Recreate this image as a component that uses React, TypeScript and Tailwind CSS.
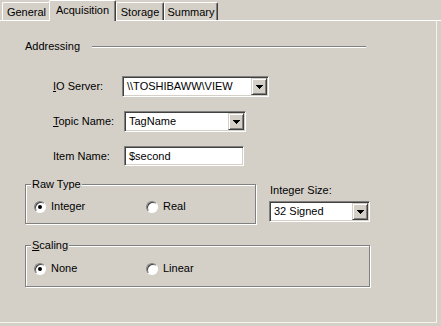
import React from "react";

const sunken =
  "border border-t-[#808080] border-l-[#808080] border-b-white border-r-white shadow-[inset_1px_1px_0_#404040,inset_-1px_-1px_0_#d4d0c8] bg-white";

function DropButton() {
  return (
    <div className="flex h-full w-[16px] items-center justify-center border border-t-[#d4d0c8] border-l-[#d4d0c8] border-b-[#404040] border-r-[#404040] bg-[#d4d0c8] shadow-[inset_1px_1px_0_white,inset_-1px_-1px_0_#808080]">
      <svg width="7" height="4" viewBox="0 0 7 4">
        <path d="M0 0h7v1H0zM1 1h5v1H1zM2 2h3v1H2zM3 3h1v1H3z" fill="black" />
      </svg>
    </div>
  );
}

function Combo({ value, width }: { value: string; width: string }) {
  return (
    <div className={`flex h-[21px] items-stretch p-px ${sunken} ${width}`}>
      <div className="flex flex-1 items-center pl-[3px] leading-none">{value}</div>
      <DropButton />
    </div>
  );
}

function Radio({ label, checked }: { label: React.ReactNode; checked?: boolean }) {
  return (
    <div className="flex items-center gap-[5px]">
      <span className="flex h-3 w-3 items-center justify-center rounded-full border border-t-[#808080] border-l-[#808080] border-b-white border-r-white bg-white shadow-[inset_1px_1px_0_#404040]">
        {checked && <span className="h-1 w-1 rounded-full bg-black" />}
      </span>
      <span>{label}</span>
    </div>
  );
}

function Tab({ label, active, className = "" }: { label: string; active?: boolean; className?: string }) {
  if (active) {
    return (
      <div
        className={`relative z-10 -mb-px flex h-[21px] items-start justify-center border-l border-t border-r border-l-white border-t-white border-r-[#404040] bg-[#d4d0c8] pt-[3px] shadow-[inset_-1px_0_0_#808080] rounded-tl-[2px] rounded-tr-[2px] ${className}`}
      >
        {label}
      </div>
    );
  }
  return (
    <div
      className={`flex h-[18px] items-start justify-center border-l border-t border-r border-l-white border-t-white border-r-[#404040] pt-[3px] shadow-[inset_-1px_0_0_#808080] rounded-tl-[2px] rounded-tr-[2px] ${className}`}
    >
      {label}
    </div>
  );
}

function Group({ legend, className = "", children }: { legend: React.ReactNode; className?: string; children: React.ReactNode }) {
  return (
    <fieldset
      className={`border border-[#808080] shadow-[1px_1px_0_white,inset_1px_1px_0_white] ${className}`}
    >
      <legend className="ml-[5px] bg-[#d4d0c8] px-px leading-[13px]">{legend}</legend>
      {children}
    </fieldset>
  );
}

export default function App() {
  return (
    <div className="h-[326px] w-[441px] overflow-hidden bg-[#d4d0c8] font-['Liberation_Sans',Arial,sans-serif] text-[11px] leading-[13px] text-black">
      {/* Tabs */}
      <div className="flex h-[21px] items-end border-b border-white pl-[2px]">
        <Tab label="General" className="w-[49px]" />
        <Tab label="Acquisition" active className="-ml-[2px] w-[67px]" />
        <Tab label="Storage" className="w-[48px]" />
        <Tab label="Summary" className="w-[54px]" />
      </div>

      {/* Page */}
      <div className="h-[302px] w-[437px] border-b border-r border-b-[#f4f3ee] border-r-[#f4f3ee] pl-[25px] pt-[19px]">
        {/* Addressing */}
        <div className="flex items-center">
          <span>Addressing</span>
          <div className="ml-[12px] h-[2px] w-[274px] border-t border-b border-t-[#808080] border-b-white" />
        </div>

        <div className="mt-[23px] flex items-center">
          <span className="w-[97px] pl-[28px]">
            <u>I</u>O Server:
          </span>
          <Combo value={"\\\\TOSHIBAWW\\VIEW"} width="w-[147px]" />
        </div>

        <div className="mt-[14px] flex items-center">
          <span className="w-[99px] pl-[28px]">
            <u>T</u>opic Name:
          </span>
          <Combo value="TagName" width="w-[122px]" />
        </div>

        <div className="mt-[14px] flex items-center">
          <span className="w-[99px] pl-[28px]">Item Name:</span>
          <div className={`flex h-[20px] w-[120px] items-center pl-[4px] ${sunken}`}>$second</div>
        </div>

        {/* Raw type + integer size */}
        <div className="mt-[12px] flex items-start">
          <Group legend="Raw Type" className="h-[46px] w-[231px]">
            <div className="flex pl-[8px] pt-[9px]">
              <div className="w-[112px]">
                <Radio label="Integer" checked />
              </div>
              <Radio label="Real" />
            </div>
          </Group>
          <div className="ml-[13px] flex flex-col pt-[6px]">
            <span className="pl-px">Integer Size:</span>
            <div className="mt-[4px]">
              <Combo value="32 Signed" width="w-[101px]" />
            </div>
          </div>
        </div>

        <Group legend={<><u>S</u>caling</>} className="mt-[15px] h-[48px] w-[345px]">
          <div className="flex pl-[8px] pt-[10px]">
            <div className="w-[112px]">
              <Radio label="None" checked />
            </div>
            <Radio label="Linear" />
          </div>
        </Group>
      </div>
    </div>
  );
}
